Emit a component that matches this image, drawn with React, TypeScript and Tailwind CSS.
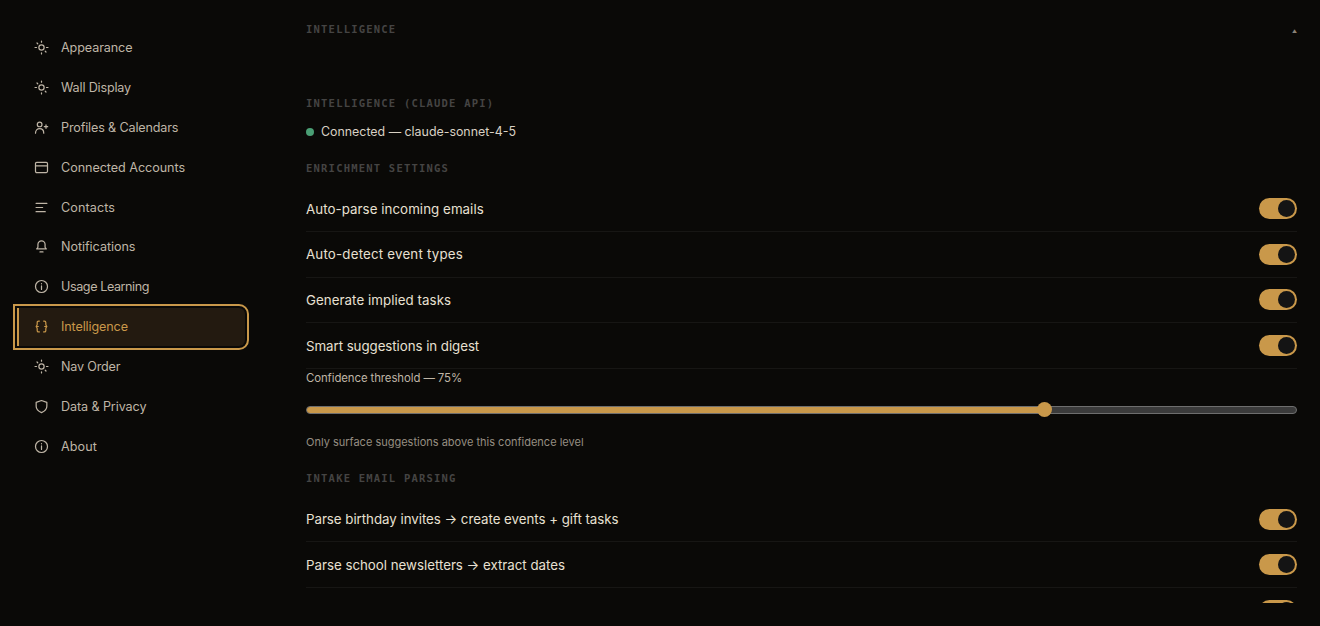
import React, { useState } from 'react';

type IconName = 'sun' | 'users' | 'card' | 'list' | 'bell' | 'info' | 'braces' | 'shield';

const NAV_ITEMS: { label: string; icon: IconName; tracking: string }[] = [
    { label: 'Appearance', icon: 'sun', tracking: 'tracking-[-0.1px]' },
    { label: 'Wall Display', icon: 'sun', tracking: 'tracking-[-0.17px]' },
    { label: 'Profiles & Calendars', icon: 'users', tracking: 'tracking-[-0.15px]' },
    { label: 'Connected Accounts', icon: 'card', tracking: 'tracking-[-0.05px]' },
    { label: 'Contacts', icon: 'list', tracking: 'tracking-[0.1px]' },
    { label: 'Notifications', icon: 'bell', tracking: 'tracking-[-0.05px]' },
    { label: 'Usage Learning', icon: 'info', tracking: 'tracking-[-0.42px]' },
    { label: 'Intelligence', icon: 'braces', tracking: 'tracking-[-0.12px]' },
    { label: 'Nav Order', icon: 'sun', tracking: 'tracking-[-0.18px]' },
    { label: 'Data & Privacy', icon: 'shield', tracking: 'tracking-[-0.1px]' },
    { label: 'About', icon: 'info', tracking: 'tracking-[0.1px]' },
];

const ENRICHMENT = [
    { label: 'Auto-parse incoming emails', tracking: 'tracking-[0.06px]' },
    { label: 'Auto-detect event types', tracking: 'tracking-[0.2px]' },
    { label: 'Generate implied tasks', tracking: 'tracking-[0.06px]' },
    { label: 'Smart suggestions in digest', tracking: 'tracking-[-0.05px]' },
];

const PARSING = [
    { label: 'Parse birthday invites → create events + gift tasks', tracking: 'tracking-[-0.03px]' },
    { label: 'Parse school newsletters → extract dates', tracking: 'tracking-[-0.01px]' },
    { label: '', tracking: 'tracking-normal' },
];

const NavIcon = ({ name }: { name: IconName }) => (
    <svg
        viewBox="0 0 16 16"
        className="w-[15px] h-[15px] shrink-0"
        fill="none"
        stroke="currentColor"
        strokeWidth="1.3"
        strokeLinecap="round"
        strokeLinejoin="round"
    >
        {name === 'sun' && (
            <>
                <circle cx="8" cy="8" r="2.8" />
                <path d="M8 1.1v1.2M8 13.7v1.2M1.1 8h1.6M13.3 8h1.6M3.2 3.2l.8.8M12 12l.8.8" />
            </>
        )}
        {name === 'users' && (
            <>
                <circle cx="6" cy="4.7" r="2.5" />
                <path d="M1.6 14c0-3 1.9-4.8 4.4-4.8s4.4 1.8 4.4 4.8M12.8 5.3v3.6M11 7.1h3.6" />
            </>
        )}
        {name === 'card' && (
            <>
                <rect x="1.6" y="2.6" width="12.8" height="10.8" rx="1.3" />
                <path d="M1.6 6.3h12.8" />
            </>
        )}
        {name === 'list' && <path d="M2.2 3.5h11.6M2.2 8h7M2.2 12.5h9.8" />}
        {name === 'bell' && (
            <path d="M8 1.9a3.8 3.8 0 0 0-3.8 3.8v3.1L2.9 10.6h10.2l-1.3-1.8V5.7A3.8 3.8 0 0 0 8 1.9zM6.4 13.8h3.2" />
        )}
        {name === 'info' && (
            <>
                <circle cx="8" cy="8" r="6.4" />
                <path d="M8 7.4v3.7M8 5v.1" />
            </>
        )}
        {name === 'braces' && (
            <path d="M5.7 2.2H4.9c-.9 0-1.5.6-1.5 1.4v2c0 1-.5 1.5-1.1 2.4.6.9 1.1 1.4 1.1 2.4v2c0 .8.6 1.4 1.5 1.4h.8M3 8h1.6M10.3 2.2h.8c.9 0 1.5.6 1.5 1.4v2c0 1 .5 1.5 1.1 2.4-.6.9-1.1 1.4-1.1 2.4v2c0 .8-.6 1.4-1.5 1.4h-.8M13 8h-1.6" />
        )}
        {name === 'shield' && (
            <path d="M8 1.6 2.3 3.6v4.2c0 3.2 2.3 5.4 5.7 6.7 3.4-1.3 5.7-3.5 5.7-6.7V3.6z" />
        )}
    </svg>
);

const SectionLabel = ({ children, className = '' }: { children: React.ReactNode; className?: string }) => (
    <h3 className={`font-['DejaVu_Sans_Mono',monospace] font-bold text-[10.5px] leading-4 tracking-[1.21px] uppercase text-[#454443] ${className}`}>
        {children}
    </h3>
);

const ToggleRow = ({ label, tracking }: { label: string; tracking: string }) => {
    const [on, setOn] = useState(true);

    return (
        <div className="flex items-center justify-between h-[45.6px] border-b border-[#171614]">
            <span className={`text-[13.3px] leading-5 text-[#e8e0d2] ${tracking}`}>{label}</span>
            <button
                onClick={() => setOn(!on)}
                className={`flex items-center w-[38px] h-[21px] p-[2px] ml-auto rounded-full ${on ? 'justify-end bg-[#c9984a]' : 'justify-start bg-[#3a3a3a]'}`}
            >
                <span className="size-[17px] rounded-full bg-[#141414]" />
            </button>
        </div>
    );
};

const App = () => {
    const [active, setActive] = useState('Intelligence');
    const threshold = 75;

    return (
        <div className="flex h-[626px] overflow-hidden bg-[#0a0907] font-['Inter',sans-serif]">
            <nav className="flex flex-col gap-[2px] w-[245px] shrink-0 pl-[17px] pt-[28.5px]">
                {NAV_ITEMS.map((item) => (
                    <button
                        key={item.label}
                        onClick={() => setActive(item.label)}
                        className={`flex items-center gap-[12px] h-[37.9px] shrink-0 pl-[15px] border-l-2 rounded-r-md text-[12.6px] ${item.tracking} ${
                            active === item.label
                                ? 'border-[#c9984a] bg-[#231a10] text-[#c9984a] outline-2 outline-offset-2 outline-[#c9984a]'
                                : 'border-transparent text-[#bfb5a6]'
                        }`}
                    >
                        <NavIcon name={item.icon} />
                        <span className="whitespace-nowrap pt-[2px]">{item.label}</span>
                    </button>
                ))}
            </nav>

            <main className="flex-1 h-[602.5px] overflow-hidden pl-[61px] pr-[23px] pt-[21px]">
                <div className="flex items-center justify-between h-4">
                    <SectionLabel>Intelligence</SectionLabel>
                    <span className="text-[5px] leading-4 pt-1 text-[#8a8378]">▲</span>
                </div>

                <SectionLabel className="mt-[58px]">Intelligence (Claude API)</SectionLabel>
                <div className="flex items-center gap-[7px] mt-[10.5px] h-5">
                    <span className="size-2 rounded-full bg-[#4a9e74]" />
                    <span className="text-[12.4px] leading-5 text-[#d9d1c4]">Connected — claude-sonnet-4-5</span>
                </div>

                <SectionLabel className="mt-[18px]">Enrichment Settings</SectionLabel>
                <div className="mt-[11px]">
                    {ENRICHMENT.map((row) => (
                        <ToggleRow key={row.label} label={row.label} tracking={row.tracking} />
                    ))}
                </div>

                <div className="h-[18px] text-[11.4px] leading-[18px] tracking-[-0.09px] text-[#bfb5a6]">Confidence threshold — {threshold}%</div>
                <div className="relative flex items-center h-4 mt-[15px]">
                    <div className="w-full h-2 rounded-full border border-[#6e6e6e] bg-[#3b3b3b] overflow-hidden">
                        <div className="h-full bg-[#c9984a]" style={{ width: `${threshold}%` }} />
                    </div>
                    <span className="absolute left-[731px] size-[15px] rounded-full bg-[#c9984a]" />
                </div>
                <p className="mt-[16.5px] text-[11px] leading-4 text-[#968e82]">Only surface suggestions above this confidence level</p>

                <SectionLabel className="mt-[20px]">Intake Email Parsing</SectionLabel>
                <div className="mt-[10.5px]">
                    {PARSING.map((row) => (
                        <ToggleRow key={row.label} label={row.label} tracking={row.tracking} />
                    ))}
                </div>
            </main>
        </div>
    );
};

export default App;
